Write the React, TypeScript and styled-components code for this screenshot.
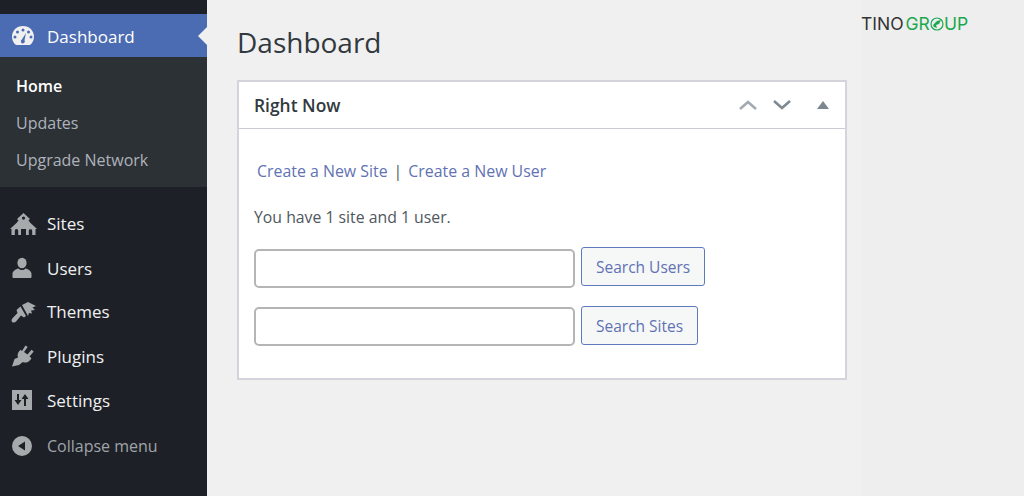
import React from "react";
import styled, { createGlobalStyle } from "styled-components";

const GlobalStyle = createGlobalStyle`
  html, body {
    margin: 0;
    padding: 0;
    background: #eeeeee;
  }
  body {
    font-family: "Open Sans", "Noto Sans", "Liberation Sans", sans-serif;
  }
`;

function DashboardIcon() {
  return (
    <svg width="24" height="22" viewBox="0 0 24 22">
      <path
        fill="#f0f0f1"
        fillRule="evenodd"
        d="M12 1C5.6 1 1 5.8 1 11.6c0 3 1.1 5.6 3 7.6.4.4 1 .8 1.6.8h12.8c.6 0 1.2-.4 1.6-.8 1.900-2 3-4.600 3-7.600C23 5.800 18.400 1 12 1zM12 3.500a1.500 1.500 0 1 1 0 3 1.500 1.500 0 0 1 0-3zM6.500 5.500a1.500 1.500 0 1 1 0 3 1.500 1.500 0 0 1 0-3zM17.500 5.500a1.500 1.500 0 1 1 0 3 1.500 1.500 0 0 1 0-3zM4 10.500a1.500 1.500 0 1 1 0 3 1.500 1.500 0 0 1 0-3zM20 10.500a1.500 1.500 0 1 1 0 3 1.500 1.500 0 0 1 0-3zM15 8l-1.500 7.200a2 2 0 1 1-2.600-.6z"
      />
    </svg>
  );
}

function SitesIcon() {
  return (
    <SitesSvg width="27" height="22" viewBox="0 0 27 22">
      <path
        fill="#a7aaad"
        fillRule="evenodd"
        d="M13.500 0l6.500 6-1.500 1.200 1.500 2.300 7 6.500h-1.500v6h-9.500v-6H11v6H1.500v-6H0l7-6.500 1.500-2.300L7 6zM13.500 3.500a1.600 1.600 0 1 0 0 3.200 1.600 1.600 0 0 0 0-3.200zM6.500 16a1.700 1.700 0 0 0-1.700 1.700V22h3.400v-4.300A1.700 1.700 0 0 0 6.500 16zM20.500 16a1.700 1.700 0 0 0-1.700 1.700V22h3.400v-4.300a1.700 1.700 0 0 0-1.700-1.700z"
      />
    </SitesSvg>
  );
}

function UsersIcon() {
  return (
    <svg width="22" height="22" viewBox="0 0 22 22">
      <ellipse cx="11" cy="6" rx="4.600" ry="5.200" fill="#a7aaad" />
      <path
        fill="#a7aaad"
        d="M7.500 11.500c-3 .8-6 2.500-6 5.500v3c0 .6.500 1 1 1h17c.5 0 1-.4 1-1v-3c0-3-3-4.700-6-5.500-1 1-2.200 1.500-3.500 1.500s-2.500-.5-3.500-1.500z"
      />
    </svg>
  );
}

function ThemesIcon() {
  return (
    <svg width="26" height="22" viewBox="0 0 26 22">
      <path
        fill="#a7aaad"
        d="M11 4l6-3 8 4-3.500 1.500L24 9l-4 .5 1 3-3-.5-1 3zM9.500 5.500l5.500 9.500-2 1.500-3-2L5 20.500c-1 1.200-2.800 1.500-3.800.6C.2 20.200.5 18.500 1.500 17.300l5-5.300-1-3z"
      />
    </svg>
  );
}

function PluginsIcon() {
  return (
    <svg width="24" height="22" viewBox="0 0 24 22">
      <path
        fill="#a7aaad"
        d="M14.500 0.500l2.200 1.500-3.700 5 3.500 2.600 4-4.800 2.200 1.700-4.200 5 2 1.700-1.500 2c-1.800 2.200-4.700 3-7.200 1.800L8 20l-7 1.500 2.500-7.500 3.500-1.500c-.8-2.200-.3-4.300 1-6l1.500-1.800 1.500 1.200z"
      />
    </svg>
  );
}

function SettingsIcon() {
  return (
    <svg width="22" height="22" viewBox="0 0 22 22">
      <path
        fill="#a7aaad"
        fillRule="evenodd"
        d="M1 1h20v20H1zM6 5v6H3.500l3.500 5 3.500-5H8V5zM13 17h2v-7h2.500L14 5l-3.500 5H13z"
      />
    </svg>
  );
}

function CollapseIcon() {
  return (
    <svg width="22" height="22" viewBox="0 0 22 22">
      <path
        fill="#a7aaad"
        fillRule="evenodd"
        d="M11 1a10 10 0 1 1 0 20 10 10 0 0 1 0-20zM14 6.500L7 11l7 4.500z"
      />
    </svg>
  );
}

function LogoGlobe() {
  return (
    <svg width="14" height="14" viewBox="0 0 14 14">
      <circle cx="7" cy="7" r="6" fill="none" stroke="#1aa84f" strokeWidth="1.200" />
      <path fill="#1aa84f" d="M3 8l4-4 4-1-2 4-3 1 1 3-3-1z" />
    </svg>
  );
}

const menuItems = [
  { label: "Sites", icon: <SitesIcon />, height: 45 },
  { label: "Users", icon: <UsersIcon />, height: 44 },
  { label: "Themes", icon: <ThemesIcon />, height: 43 },
  { label: "Plugins", icon: <PluginsIcon />, height: 46 },
  { label: "Settings", icon: <SettingsIcon />, height: 42 },
];

export default function App() {
  return (
    <>
      <GlobalStyle />
      <Page>
        <Sidebar>
          <ActiveItem>
            <IconSlot>
              <DashboardIcon />
            </IconSlot>
            Dashboard
          </ActiveItem>
          <SubMenu>
            <SubItem $current>Home</SubItem>
            <SubItem>Updates</SubItem>
            <SubItem>Upgrade Network</SubItem>
          </SubMenu>
          <MainMenu>
            {menuItems.map((item) => (
              <MenuItem key={item.label} $height={item.height}>
                <IconSlot>{item.icon}</IconSlot>
                {item.label}
              </MenuItem>
            ))}
            <CollapseItem>
              <IconSlot>
                <CollapseIcon />
              </IconSlot>
              Collapse menu
            </CollapseItem>
          </MainMenu>
        </Sidebar>
        <Content>
          <PageTitle>Dashboard</PageTitle>
          <Card>
            <CardHeader>
              <CardTitle>Right Now</CardTitle>
              <CardControls>
                <svg width="20" height="12" viewBox="0 0 20 12">
                  <path d="M2 10l8-7 8 7" fill="none" stroke="#a3abb2" strokeWidth="2.600" />
                </svg>
                <svg width="20" height="12" viewBox="0 0 20 12">
                  <path d="M2 2l8 7 8-7" fill="none" stroke="#808a92" strokeWidth="2.600" />
                </svg>
                <Toggle />
              </CardControls>
            </CardHeader>
            <CardBody>
              <LinkRow>
                <a>Create a New Site</a>
                <span>|</span>
                <a>Create a New User</a>
              </LinkRow>
              <Summary>You have 1 site and 1 user.</Summary>
              <SearchRow>
                <SearchInput $offset={2} />
                <SearchButton>Search Users</SearchButton>
              </SearchRow>
              <SearchRow>
                <SearchInput $offset={1} />
                <SearchButton>Search Sites</SearchButton>
              </SearchRow>
            </CardBody>
          </Card>
        </Content>
        <RightRail>
          <Logo>
            <LogoDark>TINO</LogoDark>
            <LogoGreen>
              GR
              <LogoGlobe />
              UP
            </LogoGreen>
          </Logo>
        </RightRail>
      </Page>
    </>
  );
}

const Page = styled.div`
  display: flex;
  width: 1024px;
  height: 496px;
  overflow: hidden;
`;

const Sidebar = styled.div`
  width: 207px;
  flex-shrink: 0;
  background: #1d2127;
  padding-top: 14px;
  box-sizing: border-box;
`;

const IconSlot = styled.div`
  width: 47px;
  padding-left: 11px;
  box-sizing: border-box;
  display: flex;
  align-items: center;
  flex-shrink: 0;
`;

const SitesSvg = styled.svg`
  margin-left: -1px;
`;

const ActiveItem = styled.div`
  position: relative;
  display: flex;
  align-items: center;
  height: 43px;
  padding-top: 1px;
  box-sizing: border-box;
  background: #4b6cb2;
  color: #fff;
  font-size: 17px;

  &::after {
    content: "";
    position: absolute;
    right: 0;
    top: 13px;
    border: 9px solid transparent;
    border-left-width: 0;
    border-right-color: #f0f0f1;
  }
`;

const SubMenu = styled.div`
  background: #2c3136;
  height: 130px;
  padding-top: 10px;
  box-sizing: border-box;
`;

const SubItem = styled.div<{ $current?: boolean }>`
  height: 37px;
  display: flex;
  align-items: center;
  padding-left: 16px;
  font-size: 16px;
  color: ${(p) => (p.$current ? "#fff" : "#aeb2bb")};
  font-weight: ${(p) => (p.$current ? 600 : 400)};
`;

const MainMenu = styled.div`
  padding-top: 14px;
`;

const MenuItem = styled.div<{ $height: number }>`
  display: flex;
  align-items: center;
  height: ${(p) => p.$height}px;
  color: #f0f0f1;
  font-size: 17px;
`;

const CollapseItem = styled.div`
  display: flex;
  align-items: center;
  height: 50px;
  color: #a0a4a8;
  font-size: 16px;
`;

const Content = styled.div`
  width: 655px;
  flex-shrink: 0;
  background: #f0f0f1;
  padding: 0 15px 0 30px;
  box-sizing: border-box;
`;

const PageTitle = styled.h1`
  margin: 0;
  height: 80px;
  padding-top: 22px;
  box-sizing: border-box;
  font-size: 28px;
  line-height: 40px;
  font-weight: 400;
  color: #32393e;
`;

const Card = styled.div`
  width: 610px;
  height: 300px;
  background: #fff;
  border: 2px solid #d3d4dc;
  box-sizing: border-box;
`;

const CardHeader = styled.div`
  display: flex;
  align-items: center;
  justify-content: space-between;
  height: 47px;
  box-sizing: border-box;
  padding: 0 16px 0 15px;
  border-bottom: 1px solid #c9ccd4;
`;

const CardTitle = styled.div`
  font-size: 17.4px;
  font-weight: 600;
  color: #32393e;
`;

const CardControls = styled.div`
  display: flex;
  align-items: center;
  gap: 14px;
`;

const Toggle = styled.div`
  width: 0;
  height: 0;
  margin-left: 11px;
  border-left: 6px solid transparent;
  border-right: 6px solid transparent;
  border-bottom: 8px solid #7d878f;
`;

const CardBody = styled.div`
  padding: 31px 15px 0;
`;

const LinkRow = styled.div`
  display: flex;
  gap: 6px;
  align-items: center;
  height: 22px;
  padding-left: 3px;
  font-size: 15.9px;
  color: #50575e;

  a {
    color: #5f72b4;
  }
`;

const Summary = styled.p`
  margin: 24px 0 19px;
  height: 22px;
  line-height: 22px;
  font-size: 15.8px;
  color: #50575e;
`;

const SearchRow = styled.div`
  display: flex;
  align-items: flex-start;
  gap: 6px;
  margin-bottom: 20px;

  & + & {
    margin-top: -2px;
  }
`;

const SearchInput = styled.input<{ $offset: number }>`
  width: 321px;
  height: 39px;
  margin: ${(p) => p.$offset}px 0 0;
  box-sizing: border-box;
  background: #fff;
  border: 2px solid #b5b5b5;
  border-radius: 5px;
  padding: 0;
`;

const SearchButton = styled.button`
  height: 39px;
  padding: 0 14px;
  box-sizing: border-box;
  background: #f6f7f7;
  border: 1px solid #5f79bd;
  border-radius: 3px;
  color: #5f72b4;
  font-family: inherit;
  font-size: 15.5px;
`;

const RightRail = styled.div`
  flex: 1;
  background: #eeeeee;
  padding: 15px 0 0 0;
`;

const Logo = styled.div`
  display: flex;
  align-items: center;
  margin-left: -1px;
  font-family: "Inter", "Liberation Sans", sans-serif;
  font-size: 17.5px;
  line-height: 18px;
  font-weight: 400;
`;

const LogoDark = styled.span`
  color: #333333;
  margin-right: 2px;
`;

const LogoGreen = styled.span`
  display: inline-flex;
  align-items: center;
  color: #1aa84f;
`;
